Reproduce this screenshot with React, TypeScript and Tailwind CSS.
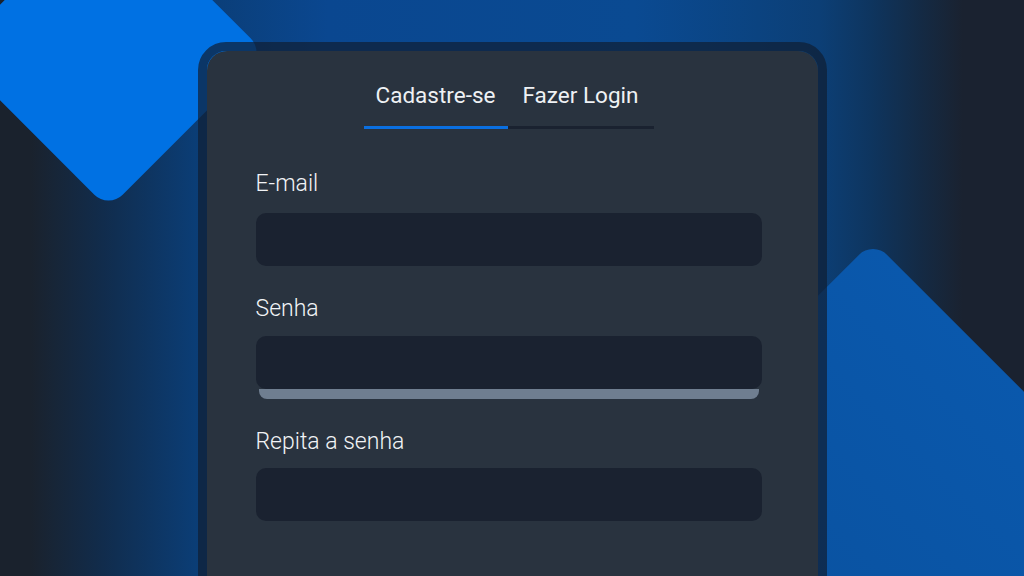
import { useState } from 'react';

const FIELDS = [
  { key: 'email', label: 'E-mail', gap: 'mt-[15px]', strength: false },
  { key: 'senha', label: 'Senha', gap: 'mt-[13px]', strength: true },
  { key: 'repita', label: 'Repita a senha', gap: 'mt-[12px]', strength: false },
];

export default function App() {
  const [tab, setTab] = useState<'cadastro' | 'login'>('cadastro');

  return (
    <div
      className="relative w-[1024px] h-[576px] overflow-hidden bg-[linear-gradient(90deg,#1a222d_3%,#112c4c_10%,#0b3d75_19%,#0a4790_32%,#0a4a92_62%,#0b4380_74%,#0c3f76_80%,#0e355f_85%,#142a44_90%,#1a2230_94%)]"
      style={{ fontFamily: 'Roboto, "Liberation Sans", sans-serif' }}
    >
      {/* background shapes */}
      <div className="absolute left-[-2px] top-[-58px] w-[221px] h-[221px] rotate-45 rounded-[20px] bg-[#0071e3]" />
      <div className="absolute left-[590px] top-[358px] w-[566px] h-[566px] rotate-45 rounded-[20px] bg-[linear-gradient(180deg,#0a58ac,#0a4e98)]" />

      <div className="relative flex justify-center pt-[42px]">
        <div className="rounded-[28px] border-[9px] border-[rgba(15,30,50,0.7)]">
          <div className="w-[611px] h-[560px] rounded-[20px] bg-[#29333f] pl-[49px] pr-[56px]">
            {/* tabs */}
            <div className="flex justify-center pt-[30px]">
              <button
                type="button"
                onClick={() => setTab('cadastro')}
                className={`w-[144px] pb-[17px] border-b-[3px] text-[22.5px] leading-[28px] font-normal text-[#eef1f4] ${
                  tab === 'cadastro' ? 'border-[#0a6fe0]' : 'border-[#1a2230]'
                }`}
              >
                Cadastre-se
              </button>
              <button
                type="button"
                onClick={() => setTab('login')}
                className={`w-[146px] pb-[17px] border-b-[3px] text-[22.5px] leading-[28px] font-normal text-[#eef1f4] ${
                  tab === 'login' ? 'border-[#0a6fe0]' : 'border-[#1a2230]'
                }`}
              >
                Fazer Login
              </button>
            </div>

            {/* form */}
            <div className="flex flex-col pt-[41px]">
              {FIELDS.map((f, i) => (
                <div key={f.key} className={i === 0 ? '' : 'mt-[29px]'}>
                  <p className="text-[23px] leading-[28px] font-light text-[#f1f3f6]">{f.label}</p>
                  <div className={`${f.gap} h-[53px] rounded-[10px] bg-[#1a2230]`} />
                  {f.strength && <div className="mx-[3px] h-[10px] rounded-b-[8px] bg-[#6f7e90]" />}
                </div>
              ))}
            </div>
          </div>
        </div>
      </div>
    </div>
  );
}
